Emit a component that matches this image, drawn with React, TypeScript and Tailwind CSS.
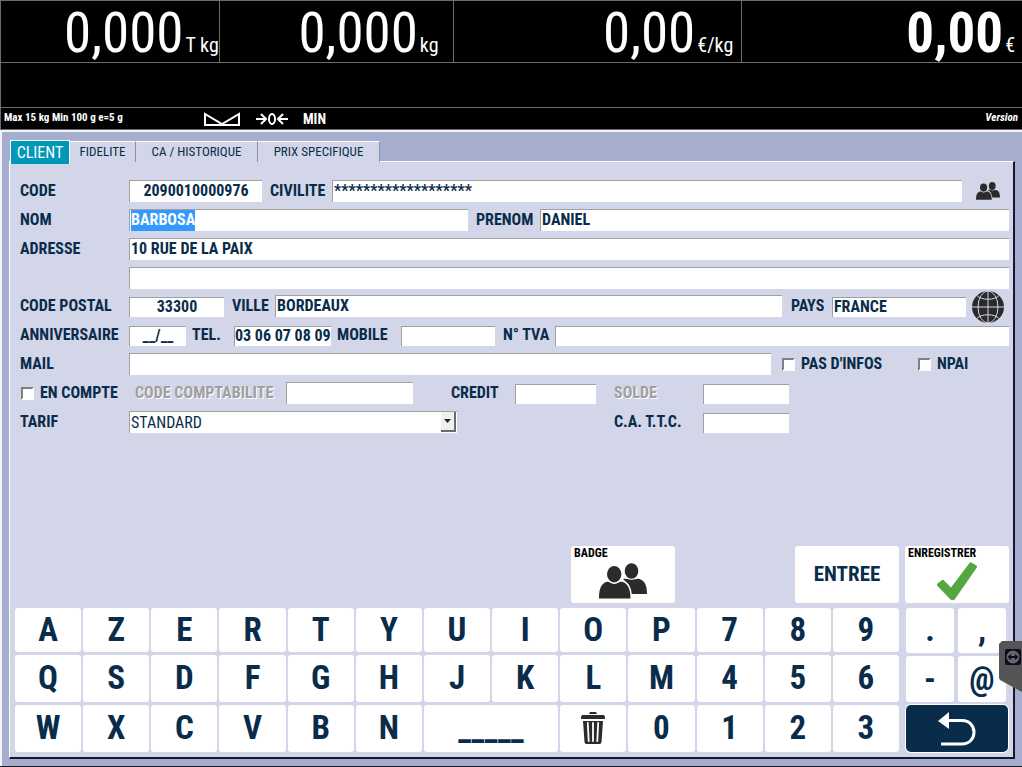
import { useEffect, useId, useRef } from "react";
import type { ReactNode, Ref } from "react";

const INPUT =
  "min-w-0 rounded-none border-t border-l border-[#a0a0a0] bg-white pb-0.5 text-base font-bold text-[#0a2c4b] outline-none selection:bg-[#3399ff] selection:text-white";

type FieldProps = {
  label: string;
  labelWidth: string;
  width: string;
  value?: string;
  short?: boolean;
  center?: boolean;
  tight?: boolean;
  disabled?: boolean;
  inputRef?: Ref<HTMLInputElement>;
};

function Field({ label, labelWidth, width, value = "", short, center, tight, disabled, inputRef }: FieldProps) {
  const id = useId();
  return (
    <>
      <label
        htmlFor={id}
        className={`${labelWidth} shrink-0 leading-[22px] whitespace-nowrap ${disabled ? "text-[#a0a0a0] [text-shadow:1px_1px_0_#fff]" : ""}`}
      >
        {label}
      </label>
      <input
        id={id}
        ref={inputRef}
        defaultValue={value}
        className={`${INPUT} ${width} ${short ? "h-5" : "h-[22px]"} ${center ? "text-center" : ""} ${tight ? "px-0" : "px-px"}`}
      />
    </>
  );
}

function Check({ label, className = "" }: { label: string; className?: string }) {
  return (
    <label className={`flex h-[22px] shrink-0 items-center gap-1.5 whitespace-nowrap ${className}`}>
      <input
        type="checkbox"
        className="size-[13px] appearance-none border-2 border-t-[#808080] border-r-white border-b-white border-l-[#808080] bg-white checked:bg-[#0a2c4b]"
      />
      {label}
    </label>
  );
}

function Row({ children }: { children: ReactNode }) {
  return <div className="flex h-[22px] items-end">{children}</div>;
}

function People({ className, outline }: { className: string; outline: string }) {
  return (
    <svg viewBox="0 0 48 36" className={className} fill="#2b2b2b" aria-hidden="true">
      <ellipse cx="32.5" cy="8" rx="6.8" ry="7.8" />
      <path d="M24 16C28 15 30 16.800 33 16.800C36 16.800 38 15.200 41 16.200C46 18 48 23 48 31H30V22Z" />
      <g stroke={outline} strokeWidth="3" paintOrder="stroke">
        <path d="M0 35.500C0 26 2 20.500 8 18.800C11 18.200 12 20.600 15.500 20.600C19 20.600 20 18.200 23 18.800C29 20.500 31.500 26 31.500 35.500Z" />
        <ellipse cx="15.200" cy="11.200" rx="7.200" ry="8.200" />
      </g>
    </svg>
  );
}

function Globe() {
  return (
    <svg viewBox="0 0 32 32" className="size-8" aria-hidden="true">
      <circle cx="16" cy="16" r="16" fill="#2b2b2b" />
      <g fill="none" stroke="#d3d6e9" strokeWidth="1">
        <path d="M16 0V32M0 16H32" />
        <ellipse cx="16" cy="16" rx="10" ry="16" />
        <path d="M5 4.500C9 9.500 23 9.500 27 4.500M5 27.500C9 22.500 23 22.500 27 27.500" />
      </g>
    </svg>
  );
}

function Trash() {
  return (
    <svg viewBox="0 0 24 32" className="h-8 w-6" fill="#2b2b2b" aria-hidden="true">
      <path d="M9 0H15L16 2H8ZM1 3H23L24 5V7H0V5ZM2 9H22L20.500 30Q20.400 32 18.500 32H5.500Q3.600 32 3.500 30Z" />
      <path d="M6.800 11L7.700 29M12 11V29M17.200 11L16.300 29" stroke="#fff" strokeWidth="1.800" strokeLinecap="round" />
    </svg>
  );
}

function Reading({ value, unit, className, bold }: { value: string; unit: string; className: string; bold?: boolean }) {
  return (
    <div className={`flex h-[61px] items-baseline justify-end gap-0.5 border-[#6b6b6b] leading-[64px] ${className}`}>
      <span className={`text-[55px] ${bold ? "font-bold" : ""}`}>{value}</span>
      <span className="text-xl">{unit}</span>
    </div>
  );
}

function Key({ children, className = "", label }: { children: ReactNode; className?: string; label?: string }) {
  return (
    <button
      type="button"
      aria-label={label}
      className={`flex items-center justify-center rounded-[3px] bg-white pb-0.5 text-[33px] leading-none font-bold ${className}`}
    >
      {children}
    </button>
  );
}

const TAB = "h-[21px] border-t border-r border-t-white border-r-[#8d91a8] bg-[#d3d6e9] text-[13px]";

export default function App() {
  const nameRef = useRef<HTMLInputElement>(null);
  const tarifId = useId();

  useEffect(() => {
    nameRef.current?.focus();
    nameRef.current?.select();
  }, []);

  return (
    <div className="relative flex min-h-screen flex-col border-b border-[#1a1a2a] bg-[#a6aecf] font-['Roboto_Condensed','Liberation_Sans_Narrow','Roboto',sans-serif] text-[#0a2c4b]">
      <header className="border-y border-l border-[#6b6b6b] bg-black text-white">
        <div className="grid grid-cols-[219fr_234fr_289fr_280fr] border-b border-[#6b6b6b]">
          <Reading value="0,000" unit="T kg" className="border-r" />
          <Reading value="0,000" unit="kg" className="border-r pr-3.5" />
          <Reading value="0,00" unit="€/kg" className="border-r pr-2" />
          <Reading value="0,00" unit="€" className="pr-[7px]" bold />
        </div>
        <div className="h-11" />
        <div className="flex h-[22px] items-center border-t border-[#6b6b6b] pr-1 pl-[3px] text-[11px] font-bold">
          <span className="w-[200px]">Max 15 kg Min 100 g e=5 g</span>
          <svg viewBox="0 0 36 14" className="h-3.5 w-9" fill="none" stroke="#fff" strokeWidth="2" aria-hidden="true">
            <path d="M1 13V2L18 12L35 2V13Z" />
          </svg>
          <svg viewBox="0 0 32 14" className="ml-4 h-3.5 w-8" fill="none" stroke="#fff" strokeWidth="2" aria-hidden="true">
            <path d="M0 7H9M5 2L10 7L5 12M32 7H23M27 2L22 7L27 12" />
            <ellipse cx="16" cy="7" rx="3" ry="5" />
          </svg>
          <span className="ml-[15px] text-sm">MIN</span>
          <span className="ml-auto italic">Version</span>
        </div>
      </header>

      <main className="flex flex-1 flex-col border-t-2 border-l-2 border-[#f4f4f8] pt-2 pr-[7px] pb-[7px] pl-[7px]">
        <nav className="relative flex items-end pl-px">
          <button type="button" className="-mb-0.5 h-6 w-[60px] border border-b-0 border-white bg-[#0098b8] text-base leading-[22px] text-white">
            CLIENT
          </button>
          <button type="button" className={`${TAB} w-[66px]`}>FIDELITE</button>
          <button type="button" className={`${TAB} w-[122px]`}>CA / HISTORIQUE</button>
          <button type="button" className={`${TAB} w-[122px]`}>PRIX SPECIFIQUE</button>
        </nav>

        <div className="-mt-px flex flex-1 flex-col border-t border-r-2 border-b-2 border-l border-t-white border-r-[#15172e] border-b-[#15172e] border-l-white bg-[#d3d6e9] pr-1 pb-[5px] pl-[5px]">
          <form className="flex flex-col gap-1.5 pt-[18px] pl-[5px] text-base font-bold">
            <div className="flex flex-col gap-[7px]">
              <Row>
                <Field label="CODE" labelWidth="w-[109px]" width="mr-2 w-[133px]" value="2090010000976" center />
                <Field label="CIVILITE" labelWidth="w-[62px]" width="flex-1" value="*******************" />
                <button type="button" aria-label="Clients" className="mr-[9px] ml-3.5 flex h-[22px] w-6 items-center">
                  <People className="h-[18px] w-6" outline="#d3d6e9" />
                </button>
              </Row>
              <Row>
                <Field label="NOM" labelWidth="w-[109px]" width="mr-2 w-[339px]" value="BARBOSA" inputRef={nameRef} />
                <Field label="PRENOM" labelWidth="w-16" width="flex-1" value="DANIEL" />
              </Row>
              <Row>
                <Field label="ADRESSE" labelWidth="w-[109px]" width="flex-1" value="10 RUE DE LA PAIX" />
              </Row>
              <Row>
                <input aria-label="ADRESSE 2" className={`${INPUT} ml-[109px] h-[22px] flex-1 px-px`} />
              </Row>
            </div>
            <div className="flex flex-col gap-[7px]">
              <Row>
                <Field label="CODE POSTAL" labelWidth="w-[109px]" width="mr-2 w-[95px]" value="33300" short center />
                <Field label="VILLE" labelWidth="w-[43px]" width="mr-[9px] flex-1" value="BORDEAUX" />
                <Field label="PAYS" labelWidth="w-[41px]" width="w-[134px]" value="FRANCE" short />
                <button type="button" aria-label="Choisir le pays" className="-my-1.5 mr-[5px] ml-1.5">
                  <Globe />
                </button>
              </Row>
              <Row>
                <Field label="ANNIVERSAIRE" labelWidth="w-[109px]" width="mr-1.5 w-[57px]" value="__/__" short center />
                <Field label="TEL." labelWidth="w-[42px]" width="mr-1.5 w-[97px]" value="03 06 07 08 09" short tight />
                <Field label="MOBILE" labelWidth="w-16" width="mr-2 w-[94px]" short />
                <Field label="N° TVA" labelWidth="w-[52px]" width="flex-1" short />
              </Row>
              <Row>
                <Field label="MAIL" labelWidth="w-[109px]" width="mr-[11px] flex-1" />
                <Check label="PAS D'INFOS" className="w-[136px]" />
                <Check label="NPAI" className="w-[91px]" />
              </Row>
              <Row>
                <Check label="EN COMPTE" className="w-[115px] pl-px" />
                <Field label="CODE COMPTABILITE" labelWidth="w-[151px]" width="mr-[38px] w-[127px]" disabled />
                <Field label="CREDIT" labelWidth="w-16" width="mr-[18px] w-[81px]" short />
                <Field label="SOLDE" labelWidth="w-[89px]" width="w-[86px]" short disabled />
              </Row>
              <Row>
                <label htmlFor={tarifId} className="w-[109px] leading-[22px]">TARIF</label>
                <div className="relative mr-[157px] flex w-[328px]">
                  <select
                    id={tarifId}
                    className="h-[22px] w-full appearance-none border-t border-l border-[#a0a0a0] bg-white px-px text-base leading-5 font-normal outline-none"
                  >
                    <option>STANDARD</option>
                  </select>
                  <span className="pointer-events-none absolute top-px right-px flex h-5 w-[15px] items-center justify-center border-r-2 border-b-2 border-[#6b6b6b] bg-[#f0f0f0]">
                    <svg viewBox="0 0 7 4" className="h-1 w-[7px]" aria-hidden="true">
                      <path d="M0 0H7L3.500 4Z" fill="#0a2c4b" />
                    </svg>
                  </span>
                </div>
                <Field label="C.A. T.T.C." labelWidth="w-[89px]" width="w-[86px]" short />
              </Row>
            </div>
          </form>

          <div className="mt-auto flex justify-end">
            <button type="button" className="mr-[120px] flex h-[57px] w-[104px] flex-col items-center rounded-[3px] bg-white px-[3px] text-xs leading-[15px] font-bold text-black">
              <span className="self-start">BADGE</span>
              <People className="mt-0.5 h-9 w-12" outline="#ffffff" />
            </button>
            <button type="button" className="mr-1.5 h-[57px] w-[104px] rounded-[3px] bg-white text-[21px] font-bold">
              ENTREE
            </button>
            <button type="button" className="flex h-[57px] w-[104px] flex-col items-center rounded-[3px] bg-white px-[3px] text-xs leading-[15px] font-bold text-black">
              <span className="self-start">ENREGISTRER</span>
              <svg viewBox="0 0 40 39" className="mt-px h-[39px] w-10" aria-hidden="true">
                <path d="M.5 21.500L5 18Q6 17.500 7 18.500L14 25.500L32.500 1Q33.500 0 34.500 .5L39.500 3.500Q40.500 4.500 39.500 6L18 37Q15.500 39.500 13 37L.5 24Q-.5 22.500 .5 21.500Z" fill="#53a93f" />
              </svg>
            </button>
          </div>

          <div className="mt-[5px] flex gap-[7px] pr-px">
            <div className="grid flex-1 grid-cols-13 grid-rows-[44px_47px_47px] gap-x-0.5 gap-y-[3px]">
              {"AZERTYUIOP789QSDFGHJKLM456WXCVBN".split("").map((char) => (
                <Key key={char}>{char}</Key>
              ))}
              <Key className="col-span-2" label="Espace">_____</Key>
              <Key label="Effacer"><Trash /></Key>
              {"0123".split("").map((char) => (
                <Key key={char}>{char}</Key>
              ))}
            </div>
            <div className="flex w-[102px] flex-col gap-[3px]">
              <div className="grid grid-cols-2 grid-rows-[45px_46px] gap-x-1 gap-y-[3px] pr-0.5">
                {[".", ",", "-", "@"].map((char) => (
                  <Key key={char}>{char}</Key>
                ))}
              </div>
              <button type="button" aria-label="Retour" className="flex flex-1 items-center justify-center rounded-[5px] bg-[#0a2c4b] ring-1 ring-white">
                <svg viewBox="0 0 38 34" className="h-[34px] w-[38px]" aria-hidden="true">
                  <path d="M0 9L11 0V17Z" fill="#fff" />
                  <path d="M10 8.500H24C40 8.500 40 32 24 32H3" fill="none" stroke="#fff" strokeWidth="3" />
                </svg>
              </button>
            </div>
          </div>
        </div>
      </main>

      <button type="button" aria-label="Ouvrir la session à distance" className="absolute right-0 bottom-[74px]">
        <svg viewBox="0 0 23 51" className="h-[51px] w-[23px]" aria-hidden="true">
          <path d="M0 3L3 0H23V51L1 39L0 37Z" fill="#555" />
          <rect x="6" y="8" width="16" height="16" rx="2" fill="#0b0b24" />
          <circle cx="14" cy="16" r="6.500" fill="#666" />
          <path d="M8.500 16L12 13V15H16V13L19.500 16L16 19V17H12V19Z" fill="#0b0b24" />
        </svg>
      </button>
    </div>
  );
}
